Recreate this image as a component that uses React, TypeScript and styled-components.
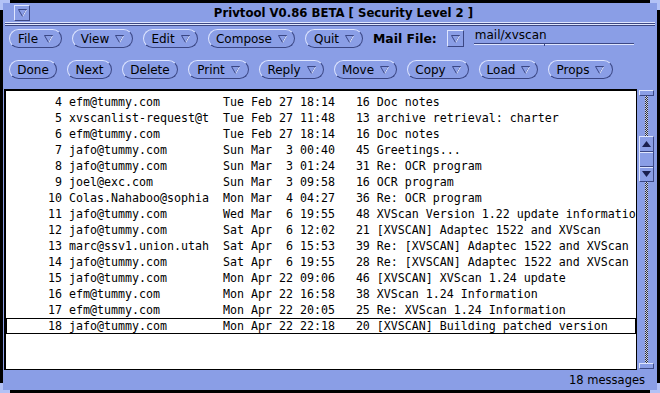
import React from "react";
import styled, { createGlobalStyle } from "styled-components";

const BLUE = "#8a9ee6";
const LIGHT = "#dfe6ff";
const DARK = "#3b4784";

const Global = createGlobalStyle`
  html, body { margin: 0; padding: 0; background: #000; }
  body { width: 660px; height: 393px; overflow: hidden; }
  #root { padding: 3px; }
`;

const Frame = styled.div`
  position: relative;
  width: 654px;
  height: 387px;
  background: ${BLUE};
  display: flex;
  flex-direction: column;
  font-family: "DejaVu Sans", sans-serif;
  color: #000;
`;

const Corner = styled.div<{ $pos: "tl" | "tr" | "bl" | "br" }>`
  position: absolute;
  width: 10px;
  height: 10px;
  box-sizing: border-box;
  border-color: #b3c2f6;
  border-style: solid;
  border-width: ${(p) =>
    p.$pos === "tl" ? "3px 0 0 3px" : p.$pos === "tr" ? "3px 3px 0 0" : p.$pos === "bl" ? "0 0 3px 3px" : "0 3px 3px 0"};
  ${(p) => (p.$pos[0] === "t" ? "top: -3px;" : "bottom: -3px;")}
  ${(p) => (p.$pos[1] === "l" ? "left: -3px;" : "right: -3px;")}
`;

const TitleBar = styled.div`
  height: 19px;
  display: flex;
  align-items: center;
  padding-left: 11px;
`;

const SquareButton = styled.div<{ $size: number }>`
  width: ${(p) => p.$size}px;
  height: ${(p) => p.$size}px;
  box-sizing: border-box;
  border: 1px solid;
  border-color: ${LIGHT} ${DARK} ${DARK} ${LIGHT};
  display: flex;
  align-items: center;
  justify-content: center;
  flex: none;
`;

const Title = styled.div`
  flex: 1;
  text-align: center;
  font-weight: bold;
  font-size: 11.7px;
  letter-spacing: 0;
  white-space: pre;
`;

const DoubleRule = styled.div`
  height: 4px;
  margin: 0 2px;
  background: linear-gradient(
    to bottom,
    ${LIGHT} 0 1px,
    ${DARK} 1px 2px,
    ${LIGHT} 2px 3px,
    ${DARK} 3px 4px
  );
`;

const ControlRow = styled.div<{ $top: number }>`
  display: flex;
  align-items: center;
  gap: 10px;
  padding-left: 6px;
  margin-top: ${(p) => p.$top}px;
  height: 19px;
`;

const Pill = styled.div<{ $w: number }>`
  width: ${(p) => p.$w}px;
  height: 19px;
  box-sizing: border-box;
  border-radius: 10px;
  border: 1px solid;
  border-color: ${LIGHT} ${DARK} ${DARK} ${LIGHT};
  display: flex;
  align-items: center;
  justify-content: center;
  gap: 6px;
  font-size: 12px;
  flex: none;
`;

const Label = styled.div`
  font-weight: bold;
  font-size: 12.4px;
  white-space: pre;
`;

const Field = styled.div`
  position: relative;
  width: 160px;
  height: 15px;
  box-sizing: border-box;
  border-bottom: 1px solid ${DARK};
  box-shadow: 0 1px 0 ${LIGHT};
  font-size: 12px;
  line-height: 13px;
  padding-left: 1px;
  align-self: flex-start;
  margin-top: 0px;
`;

const Caret = styled.div`
  position: absolute;
  left: 70px;
  bottom: -3px;
  width: 1px;
  height: 3px;
  background: ${DARK};
`;

const ListArea = styled.div`
  display: flex;
  margin-top: 10px;
  height: 281px;
  padding-left: 1px;
`;

const List = styled.div`
  width: 633px;
  box-sizing: border-box;
  border: 2px solid #000;
  border-right-width: 1px;
  border-bottom-width: 1px;
  background: #fff;
  padding-top: 3px;
  overflow: hidden;
  font-family: "DejaVu Sans Mono", monospace;
  font-size: 11.63px;
`;

const Row = styled.div<{ $sel?: boolean }>`
  display: flex;
  height: 16px;
  line-height: 16px;
  padding-left: 42px;
  white-space: pre;
  ${(p) => (p.$sel ? "box-shadow: inset 0 0 0 1px #000;" : "")}
`;

const Num = styled.span`
  width: 2ch;
  text-align: right;
  flex: none;
`;
const Sender = styled.span`
  width: 20ch;
  margin-left: 1ch;
  overflow: hidden;
  flex: none;
`;
const DateCol = styled.span`
  width: 16ch;
  margin-left: 2ch;
  flex: none;
`;
const Size = styled.span`
  width: 2ch;
  margin-left: 3ch;
  text-align: right;
  flex: none;
`;
const Subject = styled.span`
  margin-left: 1ch;
  flex: none;
`;

const Scrollbar = styled.div`
  width: 15px;
  margin-left: 2px;
  display: flex;
  flex-direction: column;
  align-items: center;
  padding: 1px 0;
  box-sizing: border-box;
`;

const Anchor = styled.div`
  width: 15px;
  height: 6px;
  box-sizing: border-box;
  border: 1px solid;
  border-color: ${LIGHT} ${DARK} ${DARK} ${LIGHT};
  flex: none;
`;

const Cable = styled.div<{ $h?: number }>`
  width: 3px;
  ${(p) => (p.$h ? `height: ${p.$h}px; flex: none;` : "flex: 1;")}
  background: repeating-conic-gradient(#333 0 25%, #c8d0f0 0 50%) 0 0 / 2px 2px;
`;

const Elevator = styled.div`
  width: 15px;
  box-sizing: border-box;
  border: 1px solid;
  border-color: ${LIGHT} ${DARK} ${DARK} ${LIGHT};
  display: flex;
  flex-direction: column;
  flex: none;
`;

const ElevCell = styled.div<{ $last?: boolean }>`
  height: 14px;
  display: flex;
  align-items: center;
  justify-content: center;
  ${(p) => (p.$last ? "" : `border-bottom: 1px solid ${DARK}; box-shadow: 0 1px 0 ${LIGHT};`)}
`;

const Status = styled.div`
  flex: 1;
  display: flex;
  align-items: center;
  justify-content: flex-end;
  padding-right: 12px;
  padding-bottom: 1px;
  font-size: 11.5px;
`;

const MenuMark = () => (
  <svg width="9" height="8" viewBox="0 0 9 8">
    <polygon points="0.5,0.5 8.5,0.5 4.5,7.5" fill="none" stroke={DARK} strokeWidth="1" />
    <line x1="8.5" y1="1" x2="4.8" y2="7.4" stroke={LIGHT} strokeWidth="1" />
  </svg>
);

const Arrow = ({ up }: { up?: boolean }) => (
  <svg width="9" height="6" viewBox="0 0 9 6">
    <polygon points={up ? "0,6 9,6 4.5,0" : "0,0 9,0 4.5,6"} fill="#1a2050" />
  </svg>
);

type Msg = [number, string, string, number, string];

const messages: Msg[] = [
  [4, "efm@tummy.com", "Tue Feb 27 18:14", 16, "Doc notes"],
  [5, "xvscanlist-request@tummy.com", "Tue Feb 27 11:48", 13, "archive retrieval: charter"],
  [6, "efm@tummy.com", "Tue Feb 27 18:14", 16, "Doc notes"],
  [7, "jafo@tummy.com", "Sun Mar  3 00:40", 45, "Greetings..."],
  [8, "jafo@tummy.com", "Sun Mar  3 01:24", 31, "Re: OCR program"],
  [9, "joel@exc.com", "Sun Mar  3 09:58", 16, "OCR program"],
  [10, "Colas.Nahaboo@sophia.inria.fr", "Mon Mar  4 04:27", 36, "Re: OCR program"],
  [11, "jafo@tummy.com", "Wed Mar  6 19:55", 48, "XVScan Version 1.22 update information"],
  [12, "jafo@tummy.com", "Sat Apr  6 12:02", 21, "[XVSCAN] Adaptec 1522 and XVScan"],
  [13, "marc@ssv1.union.utah.edu", "Sat Apr  6 15:53", 39, "Re: [XVSCAN] Adaptec 1522 and XVScan"],
  [14, "jafo@tummy.com", "Sat Apr  6 19:55", 28, "Re: [XVSCAN] Adaptec 1522 and XVScan"],
  [15, "jafo@tummy.com", "Mon Apr 22 09:06", 46, "[XVSCAN] XVScan 1.24 update"],
  [16, "efm@tummy.com", "Mon Apr 22 16:58", 38, "XVScan 1.24 Information"],
  [17, "efm@tummy.com", "Mon Apr 22 20:05", 25, "Re: XVScan 1.24 Information"],
  [18, "jafo@tummy.com", "Mon Apr 22 22:18", 20, "[XVSCAN] Building patched version"],
];

const row1: [string, number, boolean][] = [
  ["File", 53, true],
  ["View", 61, true],
  ["Edit", 55, true],
  ["Compose", 87, true],
  ["Quit", 58, true],
];

const row2: [string, number, boolean][] = [
  ["Done", 48, false],
  ["Next", 45, false],
  ["Delete", 56, false],
  ["Print", 61, true],
  ["Reply", 65, true],
  ["Move", 63, true],
  ["Copy", 62, true],
  ["Load", 59, true],
  ["Props", 65, true],
];

export default function App() {
  return (
    <>
      <Global />
      <Frame>
        <Corner $pos="tl" />
        <Corner $pos="tr" />
        <Corner $pos="bl" />
        <Corner $pos="br" />
        <TitleBar>
          <SquareButton $size={16}>
            <MenuMark />
          </SquareButton>
          <Title>Privtool V0.86 BETA [ Security Level 2 ]</Title>
        </TitleBar>
        <DoubleRule />
        <ControlRow $top={3}>
          {row1.map(([t, w, m]) => (
            <Pill key={t} $w={w}>
              <span>{t}</span>
              {m && <MenuMark />}
            </Pill>
          ))}
          <Label>Mail File:</Label>
          <SquareButton $size={17}>
            <MenuMark />
          </SquareButton>
          <Field>
            mail/xvscan
            <Caret />
          </Field>
        </ControlRow>
        <ControlRow $top={12}>
          {row2.map(([t, w, m]) => (
            <Pill key={t} $w={w}>
              <span>{t}</span>
              {m && <MenuMark />}
            </Pill>
          ))}
        </ControlRow>
        <ListArea>
          <List>
            {messages.map(([n, from, date, size, subj]) => (
              <Row key={n} $sel={n === 18}>
                <Num>{n}</Num>
                <Sender>{from.slice(0, 20)}</Sender>
                <DateCol>{date}</DateCol>
                <Size>{size}</Size>
                <Subject>{subj}</Subject>
              </Row>
            ))}
          </List>
          <Scrollbar>
            <Anchor />
            <Cable $h={40} />
            <Elevator>
              <ElevCell>
                <Arrow up />
              </ElevCell>
              <ElevCell />
              <ElevCell $last>
                <Arrow />
              </ElevCell>
            </Elevator>
            <Cable />
            <Anchor />
          </Scrollbar>
        </ListArea>
        <Status>18 messages</Status>
      </Frame>
    </>
  );
}
